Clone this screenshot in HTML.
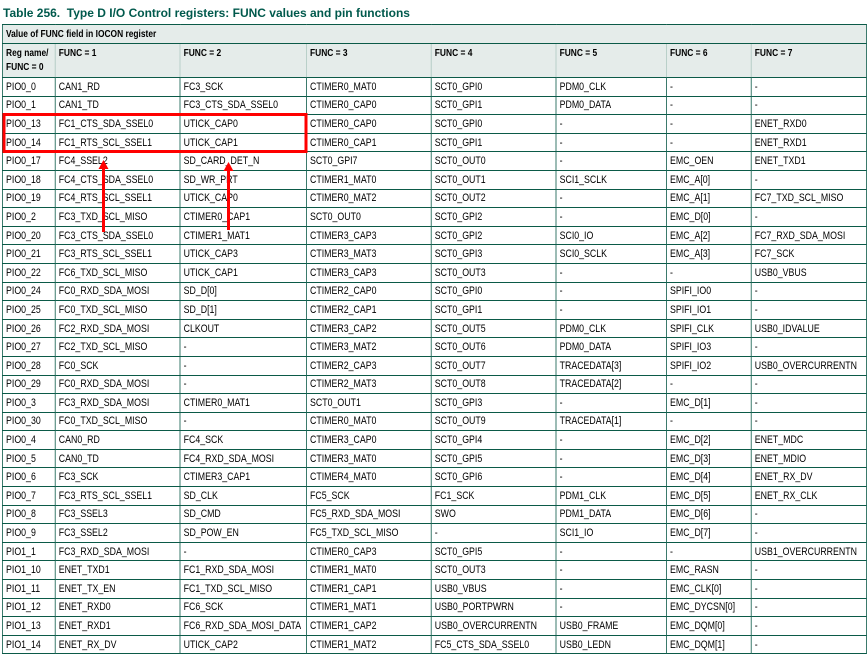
<!DOCTYPE html>
<html><head><meta charset="utf-8"><style>
html,body{margin:0;padding:0;background:#fff;width:867px;height:659px;overflow:hidden;position:relative}
.title{position:absolute;left:3px;top:6px;font:bold 12px "Liberation Sans",sans-serif;color:#00594c;white-space:nowrap}
.wrap{position:absolute;left:2px;top:24px;width:1080px;transform:scaleX(0.8);transform-origin:0 0}
table{border-collapse:collapse;table-layout:fixed;width:1080px;font:11px "Liberation Sans",sans-serif;color:#000}
td{border:1px solid #0b5a48;padding:0 0 0 4px;white-space:nowrap;overflow:hidden;height:17.6px;line-height:14px;vertical-align:middle}
tr.h td{background:#e5ecea;font-weight:bold;font-size:10.5px;border-left-color:#a8c4bc;border-right-color:#a8c4bc}
tr.h1 td{height:18px;border-left-color:#0b5a48;border-right-color:#0b5a48}
tr.h2 td{height:31px;vertical-align:top;padding-top:2px}
tr.h2 td:first-child{border-left-color:#0b5a48}
tr.h2 td:last-child{border-right-color:#0b5a48}
svg{position:absolute;left:0;top:0}
</style></head><body>
<div class="title">Table 256.&nbsp; Type D I/O Control registers: FUNC values and pin functions</div>
<div class="wrap"><table>
<colgroup><col style="width:66px"><col style="width:156px"><col style="width:158px"><col style="width:156px"><col style="width:156px"><col style="width:138px"><col style="width:106px"><col style="width:144px"></colgroup>
<tr class="h h1"><td colspan="8">Value of FUNC field in IOCON register</td></tr>
<tr class="h h2"><td>Reg name/<br>FUNC = 0</td><td>FUNC = 1</td><td>FUNC = 2</td><td>FUNC = 3</td><td>FUNC = 4</td><td>FUNC = 5</td><td>FUNC = 6</td><td>FUNC = 7</td></tr>
<tr><td>PIO0_0</td><td>CAN1_RD</td><td>FC3_SCK</td><td>CTIMER0_MAT0</td><td>SCT0_GPI0</td><td>PDM0_CLK</td><td>-</td><td>-</td></tr>
<tr><td>PIO0_1</td><td>CAN1_TD</td><td>FC3_CTS_SDA_SSEL0</td><td>CTIMER0_CAP0</td><td>SCT0_GPI1</td><td>PDM0_DATA</td><td>-</td><td>-</td></tr>
<tr><td>PIO0_13</td><td>FC1_CTS_SDA_SSEL0</td><td>UTICK_CAP0</td><td>CTIMER0_CAP0</td><td>SCT0_GPI0</td><td>-</td><td>-</td><td>ENET_RXD0</td></tr>
<tr><td>PIO0_14</td><td>FC1_RTS_SCL_SSEL1</td><td>UTICK_CAP1</td><td>CTIMER0_CAP1</td><td>SCT0_GPI1</td><td>-</td><td>-</td><td>ENET_RXD1</td></tr>
<tr><td>PIO0_17</td><td>FC4_SSEL2</td><td>SD_CARD_DET_N</td><td>SCT0_GPI7</td><td>SCT0_OUT0</td><td>-</td><td>EMC_OEN</td><td>ENET_TXD1</td></tr>
<tr><td>PIO0_18</td><td>FC4_CTS_SDA_SSEL0</td><td>SD_WR_PRT</td><td>CTIMER1_MAT0</td><td>SCT0_OUT1</td><td>SCI1_SCLK</td><td>EMC_A[0]</td><td>-</td></tr>
<tr><td>PIO0_19</td><td>FC4_RTS_SCL_SSEL1</td><td>UTICK_CAP0</td><td>CTIMER0_MAT2</td><td>SCT0_OUT2</td><td>-</td><td>EMC_A[1]</td><td>FC7_TXD_SCL_MISO</td></tr>
<tr><td>PIO0_2</td><td>FC3_TXD_SCL_MISO</td><td>CTIMER0_CAP1</td><td>SCT0_OUT0</td><td>SCT0_GPI2</td><td>-</td><td>EMC_D[0]</td><td>-</td></tr>
<tr><td>PIO0_20</td><td>FC3_CTS_SDA_SSEL0</td><td>CTIMER1_MAT1</td><td>CTIMER3_CAP3</td><td>SCT0_GPI2</td><td>SCI0_IO</td><td>EMC_A[2]</td><td>FC7_RXD_SDA_MOSI</td></tr>
<tr><td>PIO0_21</td><td>FC3_RTS_SCL_SSEL1</td><td>UTICK_CAP3</td><td>CTIMER3_MAT3</td><td>SCT0_GPI3</td><td>SCI0_SCLK</td><td>EMC_A[3]</td><td>FC7_SCK</td></tr>
<tr><td>PIO0_22</td><td>FC6_TXD_SCL_MISO</td><td>UTICK_CAP1</td><td>CTIMER3_CAP3</td><td>SCT0_OUT3</td><td>-</td><td>-</td><td>USB0_VBUS</td></tr>
<tr><td>PIO0_24</td><td>FC0_RXD_SDA_MOSI</td><td>SD_D[0]</td><td>CTIMER2_CAP0</td><td>SCT0_GPI0</td><td>-</td><td>SPIFI_IO0</td><td>-</td></tr>
<tr><td>PIO0_25</td><td>FC0_TXD_SCL_MISO</td><td>SD_D[1]</td><td>CTIMER2_CAP1</td><td>SCT0_GPI1</td><td>-</td><td>SPIFI_IO1</td><td>-</td></tr>
<tr><td>PIO0_26</td><td>FC2_RXD_SDA_MOSI</td><td>CLKOUT</td><td>CTIMER3_CAP2</td><td>SCT0_OUT5</td><td>PDM0_CLK</td><td>SPIFI_CLK</td><td>USB0_IDVALUE</td></tr>
<tr><td>PIO0_27</td><td>FC2_TXD_SCL_MISO</td><td>-</td><td>CTIMER3_MAT2</td><td>SCT0_OUT6</td><td>PDM0_DATA</td><td>SPIFI_IO3</td><td>-</td></tr>
<tr><td>PIO0_28</td><td>FC0_SCK</td><td>-</td><td>CTIMER2_CAP3</td><td>SCT0_OUT7</td><td>TRACEDATA[3]</td><td>SPIFI_IO2</td><td>USB0_OVERCURRENTN</td></tr>
<tr><td>PIO0_29</td><td>FC0_RXD_SDA_MOSI</td><td>-</td><td>CTIMER2_MAT3</td><td>SCT0_OUT8</td><td>TRACEDATA[2]</td><td>-</td><td>-</td></tr>
<tr><td>PIO0_3</td><td>FC3_RXD_SDA_MOSI</td><td>CTIMER0_MAT1</td><td>SCT0_OUT1</td><td>SCT0_GPI3</td><td>-</td><td>EMC_D[1]</td><td>-</td></tr>
<tr><td>PIO0_30</td><td>FC0_TXD_SCL_MISO</td><td>-</td><td>CTIMER0_MAT0</td><td>SCT0_OUT9</td><td>TRACEDATA[1]</td><td>-</td><td>-</td></tr>
<tr><td>PIO0_4</td><td>CAN0_RD</td><td>FC4_SCK</td><td>CTIMER3_CAP0</td><td>SCT0_GPI4</td><td>-</td><td>EMC_D[2]</td><td>ENET_MDC</td></tr>
<tr><td>PIO0_5</td><td>CAN0_TD</td><td>FC4_RXD_SDA_MOSI</td><td>CTIMER3_MAT0</td><td>SCT0_GPI5</td><td>-</td><td>EMC_D[3]</td><td>ENET_MDIO</td></tr>
<tr><td>PIO0_6</td><td>FC3_SCK</td><td>CTIMER3_CAP1</td><td>CTIMER4_MAT0</td><td>SCT0_GPI6</td><td>-</td><td>EMC_D[4]</td><td>ENET_RX_DV</td></tr>
<tr><td>PIO0_7</td><td>FC3_RTS_SCL_SSEL1</td><td>SD_CLK</td><td>FC5_SCK</td><td>FC1_SCK</td><td>PDM1_CLK</td><td>EMC_D[5]</td><td>ENET_RX_CLK</td></tr>
<tr><td>PIO0_8</td><td>FC3_SSEL3</td><td>SD_CMD</td><td>FC5_RXD_SDA_MOSI</td><td>SWO</td><td>PDM1_DATA</td><td>EMC_D[6]</td><td>-</td></tr>
<tr><td>PIO0_9</td><td>FC3_SSEL2</td><td>SD_POW_EN</td><td>FC5_TXD_SCL_MISO</td><td>-</td><td>SCI1_IO</td><td>EMC_D[7]</td><td>-</td></tr>
<tr><td>PIO1_1</td><td>FC3_RXD_SDA_MOSI</td><td>-</td><td>CTIMER0_CAP3</td><td>SCT0_GPI5</td><td>-</td><td>-</td><td>USB1_OVERCURRENTN</td></tr>
<tr><td>PIO1_10</td><td>ENET_TXD1</td><td>FC1_RXD_SDA_MOSI</td><td>CTIMER1_MAT0</td><td>SCT0_OUT3</td><td>-</td><td>EMC_RASN</td><td>-</td></tr>
<tr><td>PIO1_11</td><td>ENET_TX_EN</td><td>FC1_TXD_SCL_MISO</td><td>CTIMER1_CAP1</td><td>USB0_VBUS</td><td>-</td><td>EMC_CLK[0]</td><td>-</td></tr>
<tr><td>PIO1_12</td><td>ENET_RXD0</td><td>FC6_SCK</td><td>CTIMER1_MAT1</td><td>USB0_PORTPWRN</td><td>-</td><td>EMC_DYCSN[0]</td><td>-</td></tr>
<tr><td>PIO1_13</td><td>ENET_RXD1</td><td>FC6_RXD_SDA_MOSI_DATA</td><td>CTIMER1_CAP2</td><td>USB0_OVERCURRENTN</td><td>USB0_FRAME</td><td>EMC_DQM[0]</td><td>-</td></tr>
<tr><td>PIO1_14</td><td>ENET_RX_DV</td><td>UTICK_CAP2</td><td>CTIMER1_MAT2</td><td>FC5_CTS_SDA_SSEL0</td><td>USB0_LEDN</td><td>EMC_DQM[1]</td><td>-</td></tr>
</table></div>
<svg width="867" height="659">
<rect x="4" y="114.5" width="302" height="37" fill="none" stroke="#f00" stroke-width="3"/>
<line x1="103.5" y1="168" x2="103.5" y2="232" stroke="#f00" stroke-width="3"/>
<polygon points="103.5,160 98.5,169 108.5,169" fill="#f00"/>
<line x1="228.5" y1="170" x2="228.5" y2="230" stroke="#f00" stroke-width="3"/>
<polygon points="228.5,162 223.5,171 233.5,171" fill="#f00"/>
</svg>
</body></html>
